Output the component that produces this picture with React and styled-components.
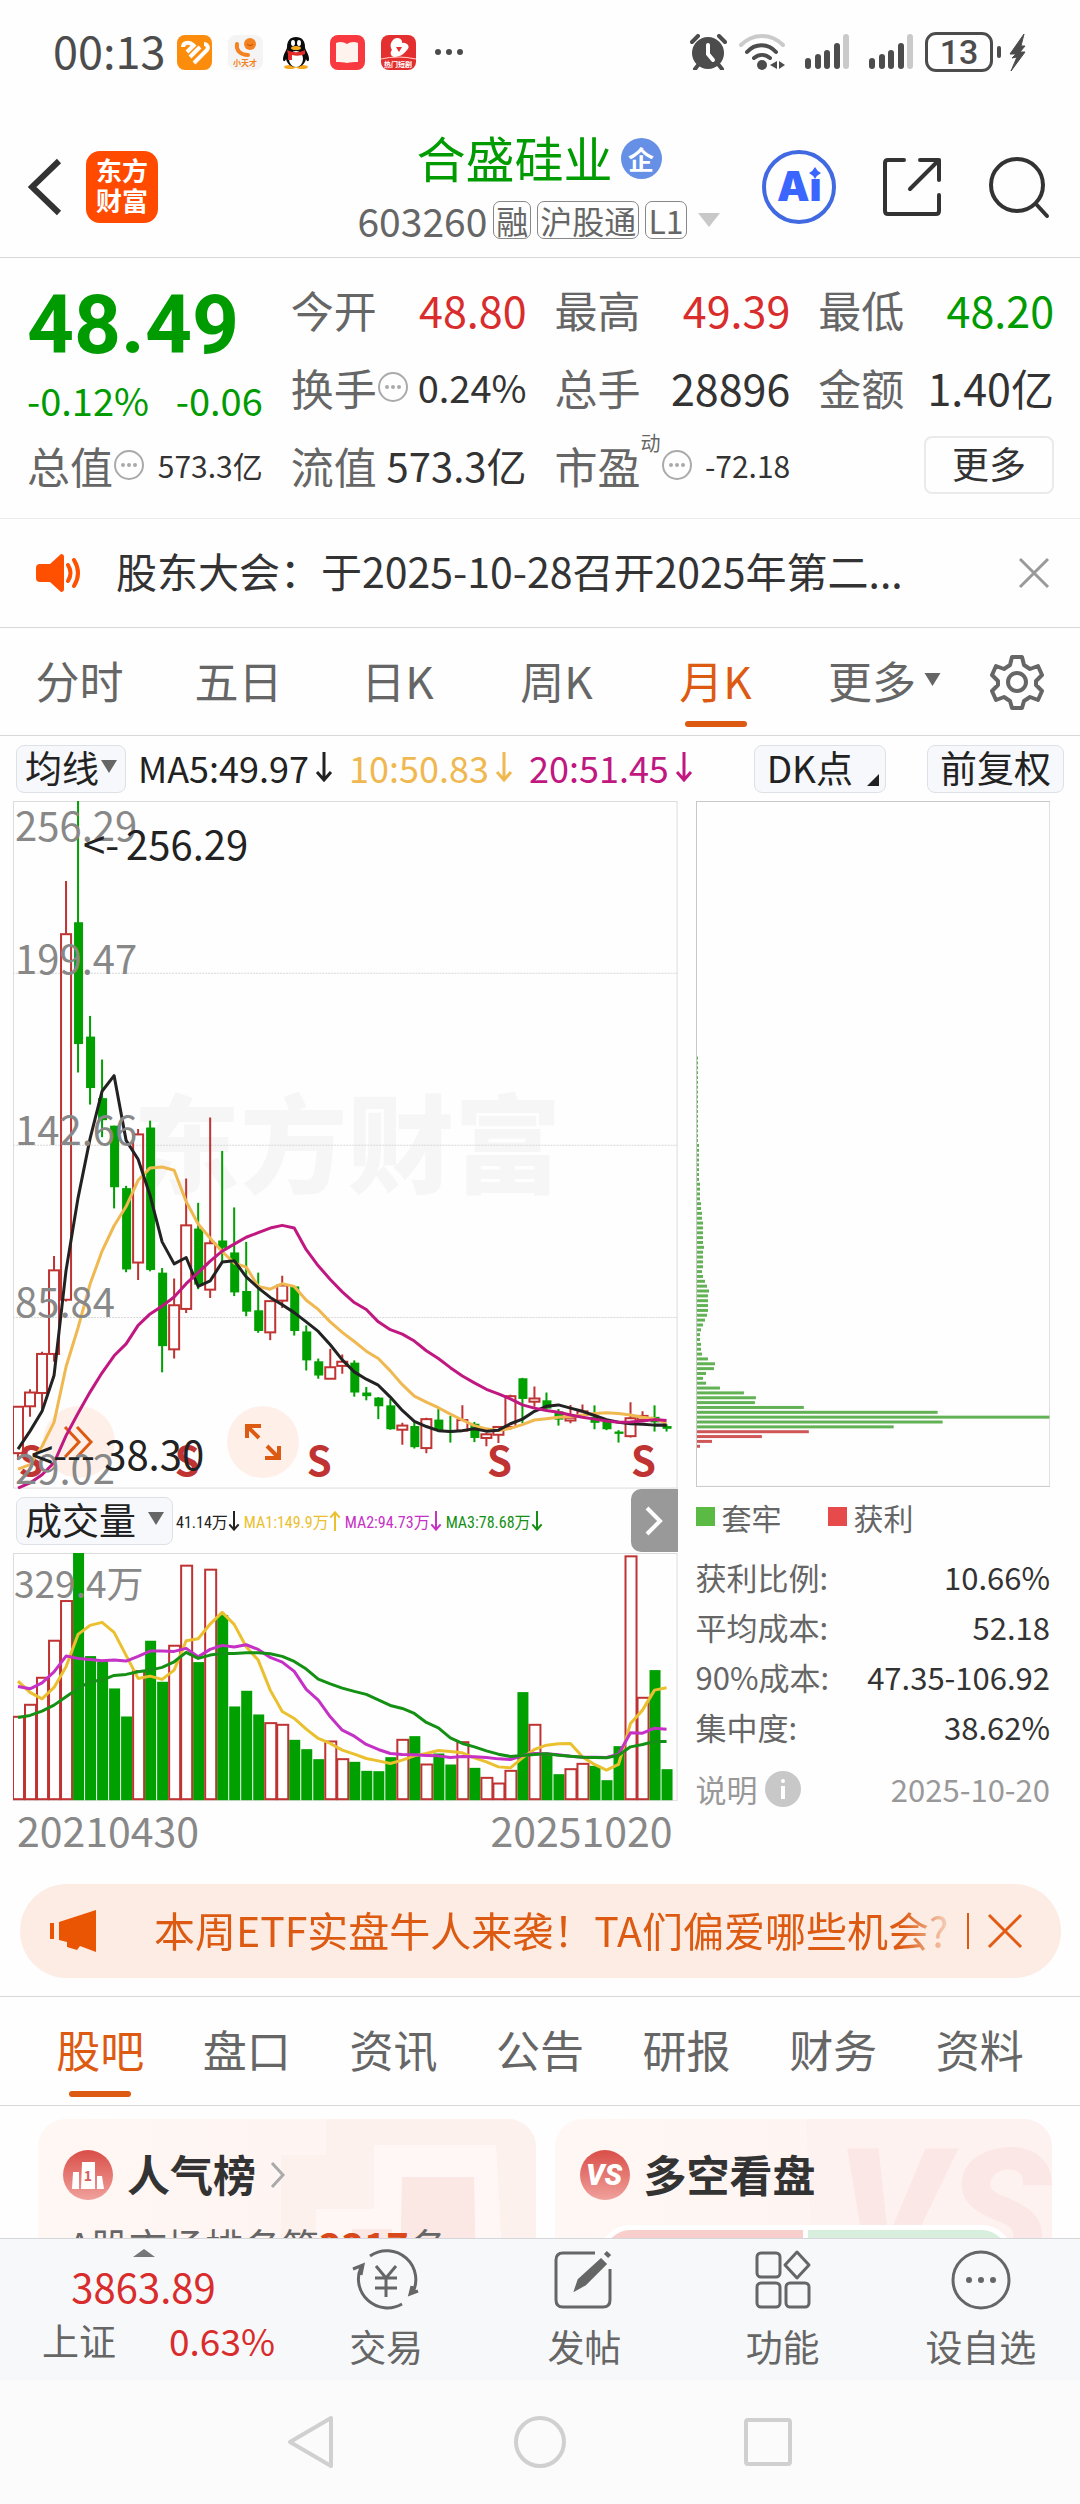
import React from 'react'
import styled, { createGlobalStyle, css } from 'styled-components'

const GREEN = '#009b00'
const RED = '#d92c2c'
const ORANGE = '#dd5a12'
const CANDLE_RED = '#bf3333'
const CANDLE_GREEN = '#00a000'

const INFO_TABS = ['股吧', '盘口', '资讯', '公告', '研报', '财务', '资料']
const PERIOD_TABS = ['分时', '五日', '日K', '周K', '月K']

// [up, high, body top, body bottom, low], levels run from 23 (top) to 1518 (bottom)
const CANDLES = [
    [1, 1342, 1342, 1443, 1458], [1, 1304, 1311, 1341, 1364], [1, 1222, 1227, 1312, 1347],
    [1, 1014, 1045, 1227, 1244], [1, 197, 313, 1109, 1113], [0, 23, 287, 552, 614],
    [0, 491, 536, 648, 684], [0, 586, 670, 718, 755], [0, 730, 730, 864, 910],
    [0, 861, 866, 1043, 1049], [1, 737, 749, 1028, 1066], [0, 719, 734, 1044, 1047],
    [0, 1040, 1050, 1210, 1267], [1, 1063, 1121, 1217, 1237], [1, 845, 947, 1129, 1138],
    [0, 898, 954, 1076, 1086], [1, 712, 986, 1087, 1105], [0, 785, 980, 996, 1025],
    [0, 908, 1006, 1093, 1101], [0, 983, 1090, 1135, 1145], [0, 1050, 1132, 1177, 1181],
    [1, 1112, 1112, 1180, 1197], [1, 1057, 1078, 1111, 1127], [0, 1080, 1080, 1177, 1187],
    [0, 1165, 1178, 1241, 1263], [0, 1237, 1243, 1274, 1281], [1, 1216, 1256, 1281, 1281],
    [1, 1228, 1244, 1253, 1270], [0, 1241, 1246, 1311, 1320], [0, 1299, 1311, 1319, 1328],
    [0, 1321, 1322, 1341, 1369], [0, 1325, 1339, 1391, 1392], [1, 1377, 1383, 1392, 1425],
    [0, 1375, 1384, 1430, 1433], [1, 1366, 1369, 1432, 1443], [0, 1347, 1370, 1393, 1395],
    [0, 1362, 1394, 1398, 1420], [1, 1339, 1371, 1394, 1397], [0, 1375, 1379, 1410, 1419],
    [1, 1398, 1402, 1410, 1428], [1, 1384, 1386, 1403, 1421], [1, 1316, 1319, 1386, 1392],
    [0, 1279, 1280, 1325, 1378], [1, 1298, 1324, 1331, 1342], [0, 1311, 1328, 1346, 1348],
    [0, 1347, 1352, 1370, 1383], [1, 1338, 1366, 1372, 1378], [1, 1337, 1352, 1360, 1362],
    [0, 1339, 1364, 1377, 1391], [0, 1368, 1375, 1391, 1393], [0, 1393, 1396, 1401, 1420],
    [1, 1332, 1367, 1406, 1409], [1, 1352, 1362, 1370, 1372], [0, 1339, 1364, 1376, 1396],
    [0, 1380, 1384, 1390, 1396],
]

const PRICE_MA = [
    {
        color: '#f0b850',
        levels: [1478, 1468, 1428, 1376, 1255, 1170, 1075, 1003, 948, 906, 849, 822, 820, 827, 895, 944, 975, 1004, 1029, 1038, 1080, 1086, 1074, 1080, 1110, 1130, 1157, 1180, 1200, 1221, 1237, 1264, 1294, 1319, 1332, 1344, 1358, 1371, 1383, 1390, 1394, 1389, 1381, 1371, 1368, 1365, 1363, 1360, 1357, 1355, 1357, 1360, 1365, 1368, 1378],
    },
    {
        color: '#222222',
        levels: [1434, 1395, 1352, 1274, 1045, 887, 758, 655, 621, 762, 803, 882, 983, 1031, 1017, 1080, 1068, 1027, 1024, 1059, 1083, 1104, 1120, 1137, 1157, 1178, 1207, 1240, 1266, 1282, 1295, 1321, 1350, 1374, 1385, 1394, 1396, 1394, 1390, 1395, 1393, 1379, 1369, 1352, 1341, 1338, 1345, 1352, 1361, 1370, 1376, 1379, 1380, 1382, 1382],
    },
    {
        color: '#c01880',
        levels: [1519, 1508, 1490, 1464, 1405, 1356, 1310, 1268, 1231, 1205, 1165, 1140, 1123, 1103, 1074, 1050, 1025, 1003, 988, 973, 963, 953, 947, 953, 1000, 1035, 1065, 1092, 1115, 1130, 1157, 1174, 1184, 1199, 1220, 1237, 1257, 1275, 1290, 1304, 1314, 1325, 1338, 1345, 1350, 1354, 1360, 1365, 1369, 1373, 1376, 1375, 1373, 1370, 1372],
    },
]

// bar tops, levels run from 219 (top) to 958 (bottom)
const VOLUMES = [707, 671, 590, 479, 360, 219, 528, 545, 625, 709, 570, 482, 605, 494, 254, 546, 266, 405, 679, 632, 703, 726, 731, 779, 807, 837, 781, 834, 845, 872, 873, 831, 776, 768, 850, 820, 853, 783, 863, 890, 907, 869, 636, 731, 822, 882, 864, 848, 857, 900, 798, 226, 650, 570, 867]
const VOLUME_UP = [0, 1, 2, 3, 4, 10, 13, 14, 16, 21, 22, 26, 27, 32, 34, 37, 39, 40, 41, 43, 46, 47, 51, 52]

const VOLUME_MA = [
    {
        color: '#eac02f',
        levels: [603, 637, 656, 622, 560, 463, 436, 427, 457, 526, 595, 588, 598, 570, 482, 476, 432, 397, 433, 500, 540, 630, 694, 715, 747, 775, 790, 810, 822, 835, 842, 850, 840, 827, 820, 811, 814, 818, 833, 845, 860, 863, 833, 808, 795, 791, 790, 830, 853, 870, 853, 730, 690, 630, 623],
    },
    {
        color: '#c530c5',
        levels: [619, 626, 608, 575, 528, 535, 538, 542, 540, 543, 529, 513, 513, 514, 505, 530, 508, 496, 501, 494, 508, 532, 546, 574, 628, 660, 710, 750, 768, 793, 808, 820, 823, 824, 826, 827, 832, 829, 830, 832, 836, 838, 826, 820, 821, 824, 828, 831, 831, 832, 822, 758, 759, 744, 747],
    },
    {
        color: '#149014',
        levels: [712, 706, 693, 675, 650, 625, 605, 600, 586, 583, 575, 570, 562, 545, 517, 535, 525, 520, 520, 518, 518, 521, 529, 544, 567, 597, 611, 624, 634, 643, 659, 676, 685, 700, 727, 743, 773, 790, 800, 812, 822, 829, 826, 823, 821, 825, 828, 831, 832, 833, 825, 800, 793, 784, 784],
    },
]

const CHIPS = [
    1, 1, 1, 1, 1, 1, 1, 1, 1, 1, 1, 1, 1, 1, 1, 1, 1, 1, 2, 2, 2,
    2, 2, 2, 2, 2, 3, 3, 3, 3, 4, 4, 5, 5, 6, 6, 6, 6, 6, 7, 6, 6, 6, 6, 5, 6, 8, 10, 12, 11, 11, 11, 11,
    10, 8, 6, 4, 3, 3, 4, 4, 5, 11, 18, 17, 9, 6, 9, 23, 47, 59, 58, 107, 241, 353, 246, 197,
    112, 65, 15, 3,
]
const FIRST_PROFIT_CHIP = 77

const GRID_LABELS = [
    ['256.29', 40],
    ['199.47', 173],
    ['142.66', 344],
    ['85.84', 516],
    ['29.02', 682],
]

const columnX = (i) => 5 + 12 * i
const priceY = (level) => ((level - 23) * 686) / 1495
const volumeY = (level) => (level - 219) / 3
const linePoints = (levels, toY) => levels.map((level, i) => `${columnX(i)},${toY(level).toFixed(1)}`).join(' ')

function StatusBar() {
    return (
        <Status>
            <StatusGroup>
                <Clock>00:13</Clock>
                <svg width="35" height="35" viewBox="0 0 35 35">
                    <rect width="35" height="35" rx="8" fill="#fb8c0c" />
                    <path d="M6 12c0-4 6-6 10-2l2 2M10 17l5-5M13 22l10-10M17 28l13-13c2-3 0-6-3-6" fill="none" stroke="#fff" strokeWidth="4" />
                </svg>
                <svg width="35" height="35" viewBox="0 0 35 35">
                    <rect width="35" height="35" rx="8" fill="#f4f4f4" />
                    <circle cx="22" cy="9" r="6" fill="#f58220" />
                    <path d="M9 9c-1 7 4 11 11 11" fill="none" stroke="#f58220" strokeWidth="4" strokeLinecap="round" />
                    <path d="M19 9c2 2 4 2 6 0" fill="none" stroke="#b04a00" />
                    <text x="17" y="31" fontSize="8" fontWeight="700" fill="#f58220" textAnchor="middle">小天才</text>
                </svg>
                <svg width="35" height="35" viewBox="0 0 35 35">
                    <ellipse cx="11" cy="32" rx="6" ry="2" fill="#f5a81c" />
                    <ellipse cx="23" cy="32" rx="6" ry="2" fill="#f5a81c" />
                    <path d="M17 2c-6 0-9 4-9 10 0 3-4 7-4 12 0 3 2 3 3 0 1 5 5 8 10 8s9-3 10-8c1 3 3 3 3 0 0-5-4-9-4-12 0-6-3-10-9-10z" fill="#0c0c0c" />
                    <ellipse cx="17" cy="24" rx="7" ry="8" fill="#fff" />
                    <ellipse cx="14" cy="8" rx="2" ry="3" fill="#fff" />
                    <ellipse cx="20" cy="8" rx="2" ry="3" fill="#fff" />
                    <ellipse cx="17" cy="13" rx="5" ry="2" fill="#f5a81c" />
                    <path d="M8 15c6 3 12 3 18 0v4c-4 2-9 2-13 1v5H9v-6z" fill="#e22c2c" />
                </svg>
                <svg width="35" height="35" viewBox="0 0 35 35">
                    <rect width="35" height="35" rx="8" fill="#f8393f" />
                    <path d="M6 8c4-2 8-1 11 1 3-2 7-3 11-1v19c-4 0-8 0-11 1-3-1-7-1-11-1z" fill="#fff3ee" />
                </svg>
                <svg width="35" height="35" viewBox="0 0 35 35">
                    <rect width="35" height="35" rx="8" fill="#e32f2f" />
                    <path d="M12 5c4-4 10-1 9 3 5-1 9 4 5 7-4 5-8 7-13 7-4-1-4-5-2-7-2-3-2-7 1-10z" fill="#fff" />
                    <path d="M15 12l6 0-3 5z" fill="#e32f2f" />
                    <path d="M0 24q17-4 35 0" fill="none" stroke="#ffd0c8" />
                    <text x="17" y="32" fontSize="7" fontWeight="700" fill="#fff" textAnchor="middle">热门短剧</text>
                </svg>
                <svg width="35" height="35" viewBox="0 0 35 35" fill="#4c4c4c">
                    <circle cx="6" cy="17" r="3" />
                    <circle cx="17" cy="17" r="3" />
                    <circle cx="28" cy="17" r="3" />
                </svg>
            </StatusGroup>
            <StatusGroup $gap={12}>
                <svg width="37" height="36" viewBox="0 0 37 36">
                    <path d="M2 8l6-6M35 8l-6-6M9 30l-4 5M28 30l4 5" stroke="#4c4c4c" strokeWidth="4" strokeLinecap="round" />
                    <circle cx="18" cy="19" r="16" fill="#4c4c4c" />
                    <path d="M18 11v9l5 6" fill="none" stroke="#fff" strokeWidth="4" strokeLinecap="round" />
                </svg>
                <svg width="46" height="36" viewBox="0 0 46 36" fill="none" strokeLinecap="round">
                    <path d="M2 11c12-12 30-12 42 0" stroke="#cacaca" strokeWidth="4" />
                    <path d="M8 18c8-9 21-9 29 0M15 24c5-4 11-4 16 0" stroke="#4c4c4c" strokeWidth="4" />
                    <circle cx="23" cy="31" r="5" fill="#4c4c4c" />
                    <path d="M38 27v8l-7-4zM40 27v8l6-4z" fill="#4c4c4c" />
                </svg>
                <SignalBars />
                <SignalBars />
                <Battery>
                    <BatteryLevel>13</BatteryLevel>
                    <svg width="4" height="12" viewBox="0 0 4 12">
                        <rect width="4" height="12" rx="2" fill="#4c4c4c" />
                    </svg>
                    <svg width="17" height="39" viewBox="0 0 17 39">
                        <path d="M15 1L1 21h6l-4 4 5-1-6 14 14-19h-5l5-6h-4z" fill="#4c4c4c" stroke="#4c4c4c" />
                    </svg>
                </Battery>
            </StatusGroup>
        </Status>
    )
}

function SignalBars() {
    return (
        <Signal width="44" height="36" viewBox="0 0 44 36" fill="#4c4c4c">
            <rect x="0" y="24" width="6" height="11" rx="3" />
            <rect x="10" y="20" width="6" height="15" rx="3" />
            <rect x="19" y="16" width="6" height="19" rx="3" />
            <rect x="29" y="9" width="6" height="26" rx="3" />
            <rect x="38" y="0" width="6" height="35" rx="3" fill="#cacaca" />
        </Signal>
    )
}

function StockHeader() {
    return (
        <Header>
            <HeaderSide>
                <IconButton aria-label="返回">
                    <svg width="34" height="58" viewBox="0 0 34 58">
                        <path d="M31 3L4 29l27 26" fill="none" stroke="#333" strokeWidth="6" />
                    </svg>
                </IconButton>
                <BrandLogo href="#home">东方<br />财富</BrandLogo>
            </HeaderSide>
            <HeaderTitle>
                <TitleRow>
                    <h1>合盛硅业</h1>
                    <CompanyBadge>企</CompanyBadge>
                </TitleRow>
                <CodeRow>
                    603260
                    <CodeTag>融</CodeTag>
                    <CodeTag>沪股通</CodeTag>
                    <CodeTag>L1</CodeTag>
                    <CodeArrow width="24" height="16" viewBox="0 0 24 16">
                        <path d="M1 1h22L12 15z" fill="#c8c8c8" />
                    </CodeArrow>
                </CodeRow>
            </HeaderTitle>
            <HeaderSide $end>
                <IconButton aria-label="智能助手">
                    <svg width="74" height="74" viewBox="0 0 74 74">
                        <circle cx="37" cy="37" r="35" fill="none" stroke="#4169e1" strokeWidth="4" />
                        <text x="15" y="51" fontFamily="Inter, sans-serif" fontSize="41" fontWeight="900" fill="#3a66ff">Aı</text>
                        <path d="M53 17q2 4 6 6-4 2-6 6-2-4-6-6 4-2 6-6z" fill="#3a66ff" />
                    </svg>
                </IconButton>
                <IconButton aria-label="分享">
                    <svg width="60" height="60" viewBox="0 0 60 60" fill="none" stroke="#333" strokeWidth="4" strokeLinecap="round" strokeLinejoin="round">
                        <path d="M22 3H6q-3 0-3 3v48q0 3 3 3h48q3 0 3-3V38" />
                        <path d="M38 3h19v20M57 3L28 32" />
                    </svg>
                </IconButton>
                <IconButton aria-label="搜索">
                    <svg width="62" height="64" viewBox="0 0 62 64" fill="none" stroke="#333" strokeWidth="4" strokeLinecap="round">
                        <circle cx="29" cy="30" r="26" />
                        <path d="M48 49l11 12" />
                    </svg>
                </IconButton>
            </HeaderSide>
        </Header>
    )
}

function MoreDot() {
    return (
        <svg width="32" height="32" viewBox="0 0 32 32">
            <circle cx="16" cy="16" r="14" fill="none" stroke="#aaa" strokeWidth="2" />
            <circle cx="10" cy="16" r="2" fill="#aaa" />
            <circle cx="16" cy="16" r="2" fill="#aaa" />
            <circle cx="22" cy="16" r="2" fill="#aaa" />
        </svg>
    )
}

function QuoteCell({ label, sup, info, value, size = 43, color }) {
    return (
        <Cell>
            <CellLabel>
                {label}
                {sup && <sup>{sup}</sup>}
                {info && <MoreDot />}
            </CellLabel>
            <CellValue $size={size} $color={color}>{value}</CellValue>
        </Cell>
    )
}

function Quote() {
    return (
        <QuoteGrid>
            <PriceCell>
                <Price>48.49</Price>
                <Change>
                    <span>-0.12%</span>
                    <span>-0.06</span>
                </Change>
            </PriceCell>
            <QuoteCell label="今开" value="48.80" color={RED} />
            <QuoteCell label="最高" value="49.39" color={RED} />
            <QuoteCell label="最低" value="48.20" color={GREEN} />
            <QuoteCell label="换手" info value="0.24%" size={38} />
            <QuoteCell label="总手" value="28896" />
            <QuoteCell label="金额" value="1.40亿" />
            <QuoteCell label="总值" info value="573.3亿" size={30} />
            <QuoteCell label="流值" value="573.3亿" size={40} />
            <QuoteCell label="市盈" sup="动" info value="-72.18" size={30} />
            <Cell>
                <MoreButton>更多</MoreButton>
            </Cell>
        </QuoteGrid>
    )
}

function PriceChart() {
    return (
        <ChartBox>
            <ChartButton $left={30} aria-label="展开">
                <svg width="34" height="36" viewBox="0 0 34 36" fill="none" stroke={ORANGE} strokeWidth="3">
                    <path d="M3 3l14 15L3 33M15 3l14 15-14 15" />
                </svg>
            </ChartButton>
            <ChartButton $left={214} aria-label="全屏">
                <svg width="38" height="38" viewBox="0 0 38 38" fill="none" stroke={ORANGE} strokeWidth="4">
                    <path d="M3 15V3h14M4 4l11 11M35 23v12H21M34 34L23 23" />
                </svg>
            </ChartButton>
            <ChartSvg viewBox="0 0 664 687">
                <rect x="0.5" y="0.5" width="663" height="686" fill="none" stroke="#dcdcdc" strokeWidth="1" />
                <text x="120" y="384" fontSize="107" fontWeight="900" fill="#000" fillOpacity="0.03">东方财富</text>
                {[172, 344, 516].map((y) => (
                    <line key={y} x1="0" x2="664" y1={y} y2={y} stroke="#d8d8d8" strokeDasharray="2 1" />
                ))}
                {CANDLES.map(([up, high, top, bottom, low], i) => {
                    const x = columnX(i)
                    if (up) {
                        return (
                            <g key={i} stroke={CANDLE_RED} strokeWidth="2" fill="none">
                                <path d={`M${x} ${priceY(high)}V${priceY(top)}M${x} ${priceY(bottom)}V${priceY(low)}`} />
                                <rect x={x - 5} y={priceY(top)} width="10" height={priceY(bottom) - priceY(top)} />
                            </g>
                        )
                    }
                    return (
                        <g key={i} fill={CANDLE_GREEN}>
                            <rect x={x - 1} y={priceY(high)} width="2" height={(low - high) * 0.459} />
                            <rect x={x - 4} y={priceY(top)} width="9" height={(bottom - top) * 0.459} />
                        </g>
                    )
                })}
                <g fontSize="40" fontWeight="700" fill={CANDLE_RED} textAnchor="middle">
                    {[18, 174, 306, 486, 630].map((x) => (
                        <text key={x} x={x} y="674">S</text>
                    ))}
                </g>
                {PRICE_MA.map(({ color, levels }) => (
                    <polyline key={color} points={linePoints(levels, priceY)} fill="none" stroke={color} strokeWidth="3" strokeLinejoin="round" />
                ))}
                <g fontSize="40" fill="#888">
                    {GRID_LABELS.map(([label, y]) => (
                        <text key={label} x="2" y={y}>{label}</text>
                    ))}
                </g>
                <g fontSize="40" fill="#222">
                    <text x="70" y="59">&lt;-</text>
                    <text x="235" y="59" textAnchor="end">256.29</text>
                    <text x="18" y="668">&lt;---</text>
                    <text x="191" y="668" textAnchor="end">38.30</text>
                </g>
            </ChartSvg>
        </ChartBox>
    )
}

function VolumeChart() {
    return (
        <ChartSvg viewBox="0 0 664 248">
            <rect x="0.5" y="0.5" width="663" height="247" fill="none" stroke="#dcdcdc" />
            {VOLUMES.map((level, i) => {
                const y = volumeY(level)
                if (VOLUME_UP.includes(i)) {
                    return <rect key={i} x={columnX(i) - 5} y={y + 1} width="11" height={245 - y} fill="#fff" stroke={CANDLE_RED} strokeWidth="2" />
                }
                return <rect key={i} x={columnX(i) - 5} y={y} width="11" height={247 - y} fill={CANDLE_GREEN} />
            })}
            {VOLUME_MA.map(({ color, levels }) => (
                <polyline key={color} points={linePoints(levels, volumeY)} fill="none" stroke={color} strokeWidth="3" strokeLinejoin="round" />
            ))}
            <text x="1" y="45" fontSize="37" fill="#888">329.4万</text>
        </ChartSvg>
    )
}

function ChipChart() {
    return (
        <ChartSvg viewBox="0 0 355 687">
            <rect x="0.5" y="0.5" width="354" height="686" fill="none" stroke="#c8c8c8" />
            {CHIPS.map((length, i) => (
                <rect key={i} x="1" y={256 + i * 4.86} width={length} height="3" fill={i < FIRST_PROFIT_CHIP ? '#62b255' : '#cf5757'} />
            ))}
        </ChartSvg>
    )
}

function Arrow({ up, size = 30 }) {
    return (
        <svg width={size * 0.6} height={size} viewBox="0 0 18 30" fill="none" stroke="currentColor" strokeWidth="3">
            <path d={up ? 'M9 30V2M2 10l7-8 7 8' : 'M9 0v28M2 20l7 8 7-8'} />
        </svg>
    )
}

function Triangle({ width = 16, height = 13 }) {
    return (
        <svg width={width} height={height} viewBox="0 0 16 13">
            <path d="M0 0h16L8 13z" fill="#666" />
        </svg>
    )
}

function Charts() {
    return (
        <ChartColumns>
            <div>
                <PriceChart />
                <VolumeHead>
                    <ChipButton $wide>成交量 <Triangle /></ChipButton>
                    <VolumeValues>
                        <Tone $color="#222">41.14万<Arrow size={20} /></Tone>
                        <Tone $color="#eac02f">MA1:149.9万<Arrow up size={20} /></Tone>
                        <Tone $color="#c530c5">MA2:94.73万<Arrow size={20} /></Tone>
                        <Tone $color="#149014">MA3:78.68万<Arrow size={20} /></Tone>
                    </VolumeValues>
                    <NextButton aria-label="下一个">
                        <svg width="20" height="32" viewBox="0 0 20 32">
                            <path d="M3 3l13 13L3 29" fill="none" stroke="#fff" strokeWidth="4" />
                        </svg>
                    </NextButton>
                </VolumeHead>
                <VolumeChart />
                <DateRow>
                    <span>20210430</span>
                    <span>20251020</span>
                </DateRow>
            </div>
            <div>
                <ChipChart />
                <Legend>
                    <LegendItem $color="#5aba44">套牢</LegendItem>
                    <LegendItem $color="#e64a4a">获利</LegendItem>
                </Legend>
                <ChipTable>
                    <tbody>
                        <tr><th>获利比例:</th><td>10.66%</td></tr>
                        <tr><th>平均成本:</th><td>52.18</td></tr>
                        <tr><th>90%成本:</th><td>47.35-106.92</td></tr>
                        <tr><th>集中度:</th><td>38.62%</td></tr>
                    </tbody>
                </ChipTable>
                <ChipNote>
                    <span>说明</span>
                    <svg width="38" height="38" viewBox="0 0 38 38">
                        <circle cx="19" cy="19" r="18" fill="#c8c8c8" />
                        <path d="M19 16v13" stroke="#fff" strokeWidth="4" />
                        <circle cx="19" cy="11" r="2" fill="#fff" />
                    </svg>
                    <time>2025-10-20</time>
                </ChipNote>
            </div>
        </ChartColumns>
    )
}

function Cards() {
    return (
        <CardArea>
            <Card>
                <CardArt viewBox="0 0 260 240">
                    <path d="M5 36h45V0h210v240H5z" fill="#fdf1ee" />
                    <path d="M40 90h58V26h122l12 214H40z" fill="#fff7f5" />
                    <path d="M126 58h72l4 182h-80z" fill="#fbe8e5" />
                    <path d="M76 110h40v60H76z" fill="#fbe8e5" />
                </CardArt>
                <CardTitle>
                    <svg width="50" height="50" viewBox="0 0 50 50">
                        <CardIconFill id="rankFill" />
                        <circle cx="25" cy="25" r="25" fill="url(#rankFill)" />
                        <path d="M10 22h6v17H9zM19 12h13v27H18zM34 26h5l2 13h-7z" fill="#fff" />
                        <text x="25" y="31" fontSize="14" fontWeight="700" fill="#d9605c" textAnchor="middle">1</text>
                    </svg>
                    <h2>人气榜</h2>
                    <svg width="16" height="28" viewBox="0 0 16 28">
                        <path d="M2 2l11 12L2 26" fill="none" stroke="#aaa" strokeWidth="3" />
                    </svg>
                </CardTitle>
                <RankText>A股市场排名第<b>3317</b>名</RankText>
            </Card>
            <Card>
                <CardArt viewBox="0 0 260 240">
                    <path d="M14 0h246v240H24z" fill="#fdf2f0" />
                    <text x="44" y="152" fontFamily="Roboto, sans-serif" fontSize="172" fontWeight="900" fontStyle="italic" fill="#fbe7e5">VS</text>
                </CardArt>
                <CardTitle>
                    <svg width="50" height="50" viewBox="0 0 50 50">
                        <CardIconFill id="versusFill" />
                        <circle cx="25" cy="25" r="25" fill="url(#versusFill)" />
                        <text x="24" y="35" fontFamily="Roboto, sans-serif" fontSize="29" fontWeight="900" fontStyle="italic" fill="#fff" textAnchor="middle">VS</text>
                    </svg>
                    <h2>多空看盘</h2>
                </CardTitle>
                <VersusBar>
                    <VersusSide $color="#f8cfcc" />
                    <VersusSide $color="#d7efdc" />
                </VersusBar>
            </Card>
        </CardArea>
    )
}

function CardIconFill({ id }) {
    return (
        <linearGradient id={id} x1="0" y1="0" x2="0" y2="1">
            <stop offset="0" stopColor="#da4e48" />
            <stop offset="1" stopColor="#f0a19c" />
        </linearGradient>
    )
}

function BottomBar() {
    return (
        <Bottom>
            <IndexCell href="#index">
                <svg width="22" height="8" viewBox="0 0 22 8">
                    <path d="M0 8L11 0l11 8z" fill="#777" />
                </svg>
                <IndexValue>3863.89</IndexValue>
                <IndexRow>
                    上证
                    <IndexChange>0.63%</IndexChange>
                </IndexRow>
            </IndexCell>
            <BottomItem>
                <svg width="68" height="62" viewBox="0 0 68 62">
                    <path d="M18 7a29 29 0 0 1 42 38M50 55a29 29 0 0 1-41-37M1 20l10-4-2 10M66 42l-8 3 2-8" />
                    <path d="M24 17l10 12 10-12M34 29v19M23 29h22M23 39h22" />
                </svg>
                交易
            </BottomItem>
            <BottomItem>
                <svg width="68" height="62" viewBox="0 0 68 62">
                    <path d="M45 4H13q-7 0-7 7v40q0 7 7 7h40q7 0 7-7V20" />
                    <path d="M26 40l3-9 22-20 4 4-20 20z" fill="#666" />
                    <path d="M56 7l3-3" strokeWidth="6" />
                </svg>
                发帖
            </BottomItem>
            <BottomItem>
                <svg width="68" height="62" viewBox="0 0 68 62">
                    <rect x="8" y="4" width="23" height="24" rx="4" />
                    <rect x="8" y="34" width="23" height="24" rx="4" />
                    <rect x="37" y="34" width="23" height="24" rx="4" />
                    <path d="M48 3l12 13-12 13-12-13z" strokeLinejoin="round" />
                </svg>
                功能
            </BottomItem>
            <BottomItem>
                <svg width="68" height="62" viewBox="0 0 68 62">
                    <circle cx="34" cy="31" r="28" />
                    <path d="M22 31h0M34 31h0M46 31h0" strokeWidth="6" strokeLinecap="round" />
                </svg>
                设自选
            </BottomItem>
        </Bottom>
    )
}

function SystemNav() {
    return (
        <Nav>
            <IconButton aria-label="后退">
                <svg width="52" height="56" viewBox="0 0 52 56">
                    <path d="M45 4v48L4 28z" />
                </svg>
            </IconButton>
            <IconButton aria-label="主屏幕">
                <svg width="52" height="56" viewBox="0 0 52 56">
                    <circle cx="26" cy="28" r="24" />
                </svg>
            </IconButton>
            <IconButton aria-label="最近任务">
                <svg width="52" height="56" viewBox="0 0 52 56">
                    <rect x="4" y="6" width="44" height="44" rx="2" />
                </svg>
            </IconButton>
        </Nav>
    )
}

function App() {
    return (
        <Screen>
            <GlobalStyle />
            <StatusBar />
            <StockHeader />
            <Quote />
            <News>
                <svg width="46" height="40" viewBox="0 0 46 40">
                    <path d="M4 11h10L25 1q3 0 3 3v32q0 3-3 3L14 29H4q-4 0-4-4V15q0-4 4-4z" fill="#ff5000" />
                    <path d="M32 12q5 8 0 16M38 7q8 13 0 26" fill="none" stroke="#ff5000" strokeWidth="4" strokeLinecap="round" />
                </svg>
                <NewsText href="#news">股东大会：于2025-10-28召开2025年第二...</NewsText>
                <IconButton aria-label="关闭">
                    <svg width="32" height="32" viewBox="0 0 32 32">
                        <path d="M2 2l28 28M30 2L2 30" stroke="#999" strokeWidth="3" />
                    </svg>
                </IconButton>
            </News>
            <Tabs>
                {PERIOD_TABS.map((tab) => (
                    <Tab key={tab} $active={tab === '月K'}>{tab}</Tab>
                ))}
                <MoreTab>更多 <Triangle width={17} height={13} /></MoreTab>
                <IconButton aria-label="设置">
                    <svg width="54" height="56" viewBox="0 0 54 56" fill="none" stroke="#666" strokeWidth="4" strokeLinejoin="round">
                        <path d="M22 3h10l2 8 6 4 8-3 4 9-6 6v4l6 6-4 9-8-3-6 4-2 7H22l-2-7-6-4-8 3-4-9 6-6v-4l-6-6 4-9 8 3 6-4z" />
                        <circle cx="27" cy="28" r="9" />
                    </svg>
                </IconButton>
            </Tabs>
            <Indicators>
                <ChipButton $tight>均线<Triangle /></ChipButton>
                <AverageValues>
                    <Tone $color="#222">MA5:49.97 <Arrow /></Tone>
                    <Tone $color="#f0b850">10:50.83 <Arrow /></Tone>
                    <Tone $color="#c01880">20:51.45 <Arrow /></Tone>
                </AverageValues>
                <ChipButton>
                    DK点
                    <CornerMark width="12" height="12" viewBox="0 0 12 12">
                        <path d="M12 0v12H0z" fill="#222" />
                    </CornerMark>
                </ChipButton>
                <ChipButton>前复权</ChipButton>
            </Indicators>
            <Charts />
            <Banner>
                <svg width="48" height="42" viewBox="0 0 48 42" fill="#ea5504">
                    <path d="M0 13h4v16H0zM9 12L46 0v42l-16-6-3 4-10-3v-5l-8-2z" />
                </svg>
                <BannerText href="#etf">本周ETF实盘牛人来袭！TA们偏爱哪些机会?</BannerText>
                <BannerClose aria-label="关闭">
                    <svg width="36" height="36" viewBox="0 0 36 36">
                        <path d="M2 2l32 32M34 2L2 34" stroke="#e25a14" strokeWidth="3" />
                    </svg>
                </BannerClose>
            </Banner>
            <Tabs $info>
                {INFO_TABS.map((tab) => (
                    <Tab key={tab} $active={tab === '股吧'}>{tab}</Tab>
                ))}
            </Tabs>
            <Cards />
            <BottomBar />
            <SystemNav />
        </Screen>
    )
}

export default App

const GlobalStyle = createGlobalStyle`
    *{
        box-sizing: border-box;
    }
    body{
        margin: 0;
        background: #fefefe;
        color: #333;
        font-family: "Noto Sans CJK SC", "Noto Sans", sans-serif;
    }
    button{
        margin: 0;
        padding: 0;
        border: none;
        background: none;
        font: inherit;
        color: inherit;
        cursor: pointer;
    }
    a{
        color: inherit;
        text-decoration: none;
    }
    h1, h2{
        margin: 0;
        font: inherit;
    }
    svg{
        display: block;
        flex: none;
    }
`
const Screen = styled.div`
    display: flex;
    flex-direction: column;
    height: 100vh;
    overflow: hidden;
    > *{
        flex: none;
    }
`
const Status = styled.header`
    display: flex;
    justify-content: space-between;
    align-items: center;
    height: 104px;
    padding: 0 54px 0 53px;
`
const StatusGroup = styled.div`
    display: flex;
    align-items: center;
    gap: ${({ $gap }) => $gap || 16}px;
`
const Clock = styled.span`
    padding-bottom: 4px;
    margin-right: -4px;
    font-size: 45px;
    line-height: 48px;
    color: #4c4c4c;
`
const Signal = styled.svg`
    margin-left: 8px;
`
const Battery = styled.div`
    display: flex;
    align-items: center;
    gap: 4px;
    svg + svg{
        margin-left: 4px;
    }
`
const BatteryLevel = styled.span`
    width: 68px;
    border: 3px solid #4c4c4c;
    border-radius: 11px;
    font-family: Roboto, sans-serif;
    font-size: 34px;
    font-weight: 500;
    line-height: 34px;
    text-align: center;
    color: #4c4c4c;
`
const Header = styled.header`
    display: grid;
    grid-template-columns: 1fr auto 1fr;
    align-items: center;
    min-height: 154px;
    padding: 12px 30px 0 28px;
    border-bottom: 1px solid #d8d8d8;
`
const HeaderSide = styled.div`
    display: flex;
    align-items: center;
    gap: ${({ $end }) => ($end ? 46 : 24)}px;
    justify-content: ${({ $end }) => ($end ? 'flex-end' : 'flex-start')};
`
const IconButton = styled.button`
    display: flex;
    align-items: center;
    justify-content: center;
`
const BrandLogo = styled.a`
    width: 72px;
    padding: 4px 0 8px;
    border-radius: 14px;
    background: #ff4a00;
    color: #fff;
    font-size: 26px;
    font-weight: 700;
    line-height: 30px;
    text-align: center;
`
const HeaderTitle = styled.div`
    display: flex;
    flex-direction: column;
    align-items: center;
    gap: 12px;
`
const TitleRow = styled.div`
    display: flex;
    align-items: center;
    gap: 8px;
    h1{
        padding-bottom: 4px;
        font-size: 49px;
        line-height: 50px;
        color: ${GREEN};
    }
`
const CompanyBadge = styled.span`
    width: 41px;
    border-radius: 50%;
    background: #6690e6;
    color: #fff;
    font-size: 26px;
    font-weight: 700;
    line-height: 41px;
    text-align: center;
`
const CodeRow = styled.div`
    display: flex;
    align-items: center;
    gap: 6px;
    color: #666;
    font-size: 39px;
    line-height: 44px;
`
const CodeTag = styled.span`
    padding: 0 2px;
    border: 1px solid #888;
    border-radius: 7px;
    font-size: 32px;
    line-height: 36px;
`
const CodeArrow = styled.svg`
    margin-left: 4px;
`
const QuoteGrid = styled.section`
    display: grid;
    grid-template-columns: repeat(4, minmax(0, 1fr));
    grid-auto-rows: 78px;
    column-gap: 28px;
    padding: 12px 26px 14px 27px;
    border-bottom: 1px solid #ececec;
`
const PriceCell = styled.div`
    grid-row: span 2;
    color: ${GREEN};
`
const Price = styled.div`
    padding-top: 11px;
    font-family: Roboto, "Noto Sans CJK SC", sans-serif;
    font-size: 82px;
    font-weight: 700;
    line-height: 88px;
`
const Change = styled.div`
    display: flex;
    justify-content: space-between;
    padding-top: 7px;
    font-size: 38px;
    line-height: 48px;
`
const Cell = styled.div`
    display: flex;
    align-items: center;
    justify-content: space-between;
    white-space: nowrap;
    > button{
        margin-left: auto;
    }
`
const CellLabel = styled.span`
    display: flex;
    align-items: center;
    color: #666;
    font-size: 43px;
    line-height: 48px;
    sup{
        align-self: flex-start;
        margin-top: -8px;
        font-size: 20px;
        line-height: 20px;
    }
`
const CellValue = styled.span`
    font-size: ${({ $size }) => $size}px;
    line-height: 48px;
    color: ${({ $color }) => $color || '#333'};
`
const MoreButton = styled.button`
    padding: 0 26px 4px;
    border: 2px solid #e8eaec;
    border-radius: 8px;
    font-size: 37px;
    line-height: 50px;
`
const News = styled.section`
    display: flex;
    align-items: center;
    min-height: 109px;
    padding: 0 30px 0 36px;
    border-bottom: 1px solid #d8d8d8;
`
const NewsText = styled.a`
    flex: 1;
    padding: 0 0 6px 34px;
    font-size: 41px;
    line-height: 48px;
`
const Tabs = styled.nav`
    display: grid;
    grid-template-columns: repeat(6, minmax(0, 1fr)) 126px;
    min-height: 108px;
    border-bottom: 1px solid #d8d8d8;
    ${({ $info }) =>
        $info &&
        css`
            grid-template-columns: repeat(7, minmax(0, 1fr));
            min-height: 110px;
            margin-top: 18px;
            padding: 0 27px;
            border-top: 1px solid #d8d8d8;
        `}
`
const Tab = styled.button`
    position: relative;
    display: flex;
    align-items: center;
    justify-content: center;
    gap: 8px;
    padding-bottom: 4px;
    font-size: 44px;
    line-height: 48px;
    color: ${({ $active }) => ($active ? ORANGE : '#666')};
    ${({ $active }) =>
        $active &&
        css`
            &::after{
                content: '';
                position: absolute;
                bottom: 8px;
                left: calc(50% - 31px);
                width: 62px;
                height: 6px;
                border-radius: 3px;
                background: ${ORANGE};
            }
        `}
`
const MoreTab = styled(Tab)`
    padding-left: 20px;
`
const Indicators = styled.div`
    display: flex;
    align-items: center;
    min-height: 65px;
    padding: 0 16px;
    > button + button{
        margin-left: 41px;
    }
`
const ChipButton = styled.button`
    display: flex;
    align-items: center;
    gap: ${({ $wide }) => ($wide ? 12 : 2)}px;
    padding: 0 ${({ $wide, $tight }) => ($wide || $tight ? 8 : 12)}px 4px;
    border: 1px solid #dde1e6;
    border-radius: 8px;
    background: #f6f8fb;
    color: #222;
    font-size: 37px;
    line-height: 42px;
`
const CornerMark = styled.svg`
    align-self: flex-end;
    margin: 0 -6px 2px 12px;
`
const AverageValues = styled.div`
    display: flex;
    flex: 1;
    gap: 16px;
    padding: 0 0 4px 12px;
    font-size: 36px;
    line-height: 42px;
`
const Tone = styled.span`
    display: flex;
    align-items: center;
    gap: 6px;
    color: ${({ $color }) => $color};
`
const ChartColumns = styled.section`
    display: grid;
    grid-template-columns: minmax(0, 15fr) minmax(0, 8fr);
    column-gap: 18px;
    padding: 0 30px 0 13px;
`
const ChartBox = styled.div`
    position: relative;
`
const ChartSvg = styled.svg`
    position: relative;
    width: 100%;
    height: auto;
    pointer-events: none;
`
const ChartButton = styled.button`
    position: absolute;
    bottom: 11px;
    left: ${({ $left }) => $left}px;
    display: flex;
    align-items: center;
    justify-content: center;
    width: 72px;
    height: 72px;
    border-radius: 50%;
    background: #fef0e9;
`
const VolumeHead = styled.div`
    display: flex;
    align-items: center;
    height: 64px;
    padding-left: 3px;
`
const VolumeValues = styled.div`
    display: flex;
    flex: 1;
    gap: 4px;
    padding-left: 3px;
    font-family: "Roboto Condensed", "Noto Sans CJK SC", sans-serif;
    font-size: 16px;
    ${Tone}{
        gap: 0;
    }
`
const NextButton = styled(IconButton)`
    width: 47px;
    height: 63px;
    border-radius: 10px 0 0 10px;
    background: #999;
`
const DateRow = styled.div`
    display: flex;
    justify-content: space-between;
    padding: 4px 5px 0 4px;
    color: #888;
    font-size: 41px;
    line-height: 48px;
`
const Legend = styled.div`
    display: flex;
    gap: 46px;
    padding-top: 10px;
`
const LegendItem = styled.span`
    display: flex;
    align-items: center;
    gap: 7px;
    color: #666;
    font-size: 30px;
    line-height: 40px;
    &::before{
        content: '';
        width: 19px;
        height: 19px;
        background: ${({ $color }) => $color};
    }
`
const ChipTable = styled.table`
    width: 100%;
    margin-top: 15px;
    border-collapse: collapse;
    font-size: 31px;
    line-height: 50px;
    white-space: nowrap;
    th{
        padding: 0;
        font-weight: 400;
        text-align: left;
        color: #666;
    }
    td{
        padding: 0;
        text-align: right;
    }
`
const ChipNote = styled.div`
    display: flex;
    align-items: center;
    gap: 6px;
    padding-top: 14px;
    color: #999;
    font-size: 31px;
    line-height: 46px;
    time{
        margin-left: auto;
    }
`
const Banner = styled.aside`
    display: flex;
    align-items: center;
    min-height: 94px;
    margin: 31px 19px 0 20px;
    padding: 0 38px 0 30px;
    border-radius: 47px;
    background: #fcece3;
    color: ${ORANGE};
`
const BannerText = styled.a`
    flex: 1;
    margin-left: 56px;
    padding-bottom: 4px;
    font-size: 41px;
    line-height: 48px;
    white-space: nowrap;
    overflow: hidden;
    -webkit-mask-image: linear-gradient(90deg, #000 92%, transparent 99%);
    mask-image: linear-gradient(90deg, #000 92%, transparent 99%);
`
const BannerClose = styled(IconButton)`
    padding-left: 18px;
    border-left: 2px solid ${ORANGE};
`
const CardArea = styled.section`
    flex: 1 1 0;
    display: grid;
    grid-template-columns: repeat(2, minmax(0, 1fr));
    gap: 19px;
    align-items: start;
    min-height: 0;
    padding: 13px 28px 0 38px;
    overflow: hidden;
`
const Card = styled.article`
    position: relative;
    height: 240px;
    padding: 31px 25px;
    border-radius: 28px;
    background: linear-gradient(90deg, #fff7f4, #fef4f2);
    overflow: hidden;
`
const CardArt = styled.svg`
    position: absolute;
    top: 0;
    right: 0;
    height: 100%;
`
const CardTitle = styled.div`
    position: relative;
    display: flex;
    align-items: center;
    gap: 14px;
    h2{
        padding-bottom: 4px;
        font-size: 43px;
        font-weight: 700;
        line-height: 46px;
    }
`
const RankText = styled.p`
    position: relative;
    margin: 20px 0 0 5px;
    color: #666;
    font-size: 38px;
    line-height: 50px;
    b{
        color: #d9481a;
    }
`
const VersusBar = styled.div`
    position: relative;
    display: flex;
    gap: 5px;
    margin: 25px 15px 0 20px;
    border: 5px solid #fff;
    border-radius: 30px;
    background: #fff;
    overflow: hidden;
`
const VersusSide = styled.div`
    flex: 1;
    height: 50px;
    background: ${({ $color }) => $color};
`
const Bottom = styled.footer`
    display: grid;
    grid-template-columns: 287px repeat(4, 1fr);
    min-height: 142px;
    border-top: 1px solid #d4d6da;
    background: #f7f8fa;
    color: #666;
`
const IndexCell = styled.a`
    display: flex;
    flex-direction: column;
    align-items: center;
    padding-top: 10px;
`
const IndexValue = styled.strong`
    padding-top: 4px;
    font-size: 40px;
    font-weight: 400;
    line-height: 50px;
    color: ${RED};
`
const IndexRow = styled.div`
    display: flex;
    justify-content: space-between;
    align-self: stretch;
    padding: 6px 12px 0 42px;
    font-size: 37px;
    line-height: 46px;
`
const IndexChange = styled.span`
    color: ${RED};
`
const BottomItem = styled.button`
    display: flex;
    flex-direction: column;
    align-items: center;
    gap: 12px;
    padding-top: 10px;
    font-size: 37px;
    line-height: 46px;
    svg{
        fill: none;
        stroke: #666;
        stroke-width: 3px;
    }
`
const Nav = styled.nav`
    display: grid;
    grid-template-columns: repeat(3, 1fr);
    min-height: 124px;
    padding: 0 198px;
    background: #fbfbfb;
    svg{
        fill: none;
        stroke: #d0d0d0;
        stroke-width: 4px;
        stroke-linejoin: round;
    }
`
